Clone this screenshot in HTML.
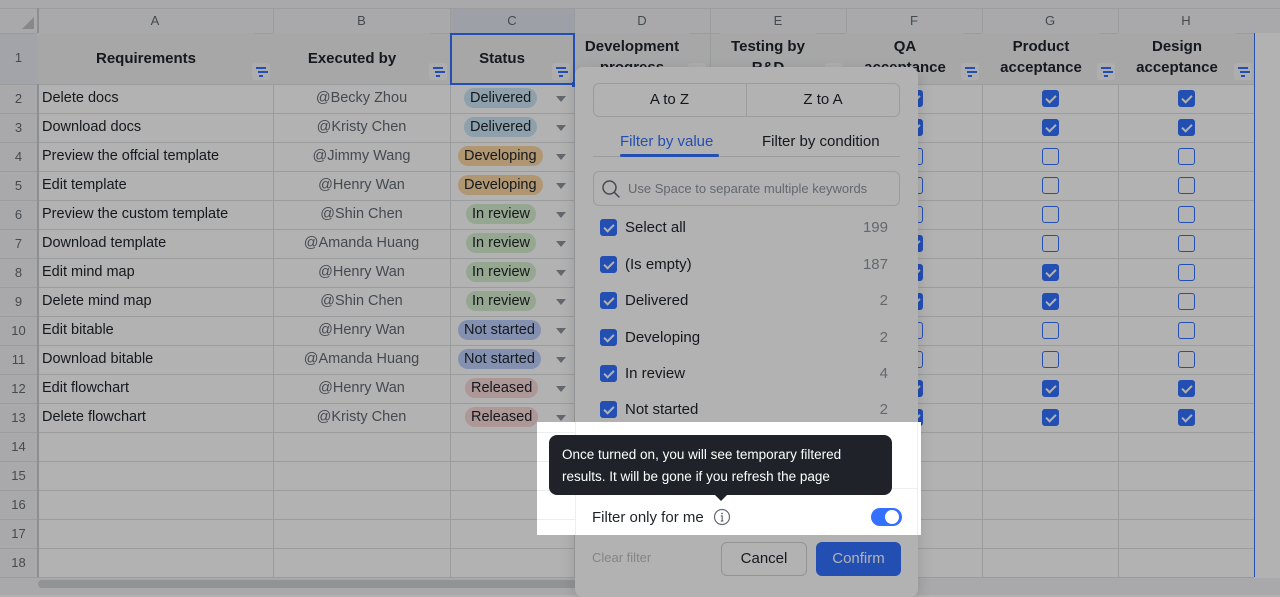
<!DOCTYPE html>
<html><head><meta charset="utf-8"><style>
*{box-sizing:border-box;margin:0;padding:0}
body{width:1280px;height:595px;overflow:hidden;background:#fff;font-family:"Liberation Sans",sans-serif;position:relative;color:#1f2329}
.a{position:absolute}
.hl{background:#f2f3f5}
.vl{position:absolute;top:8px;width:1px;height:569px;background:#dee0e3}
.hr{position:absolute;left:0;width:1254px;height:1px;background:#dee0e3}
.ch{position:absolute;top:8px;height:25px;line-height:25px;text-align:center;font-size:13px;color:#646a73}
.rn{position:absolute;left:0;width:37px;text-align:center;font-size:13px;color:#646a73}
.hd{position:absolute;top:33px;height:51px;display:flex;align-items:center;justify-content:center;text-align:center;font-weight:bold;font-size:15px;line-height:21px;background:#eff0f1}
.fi{position:absolute;width:18px;height:17px;background:#fafafa;border-radius:3px}
.fi:before{content:"";position:absolute;left:4px;top:4px;width:10px;height:1.5px;background:#3370ff;box-shadow:2px 4px 0 -0px #3370ff}
.fi:after{content:"";position:absolute;left:7px;top:12px;width:4px;height:1.5px;background:#3370ff}
.r{position:absolute;font-size:14.5px;line-height:29px;height:29px}
.pill{position:absolute;height:20px;line-height:20px;border-radius:10px;font-size:14.5px;padding:0 6px;color:#1f2329}
.dd{position:absolute;left:556px;width:0;height:0;border-left:5px solid transparent;border-right:5px solid transparent;border-top:6px solid #8f959e}
.cb{position:absolute;width:17px;height:17px;border:1.5px solid #3370ff;border-radius:3px;background:#fff}
.cb.on{background:#3370ff}
.cb.on:after{content:"";position:absolute;left:4.5px;top:1.5px;width:4px;height:8px;border:solid #fff;border-width:0 2px 2px 0;transform:rotate(45deg)}
.item{position:absolute;left:600px;width:288px;font-size:15px;height:20px;line-height:20px}
.item .cb{left:0;top:1px;width:17px;height:17px;border-radius:3px}
.item span.t{position:absolute;left:25px}
.item span.n{position:absolute;right:0;color:#8f959e}
</style></head><body>
<div class="a hl" style="left:0;top:0;width:1280px;height:33px"></div>
<div class="a" style="left:450px;top:8px;width:124px;height:25px;background:#e1e6f0"></div>
<div class="a hl" style="left:0;top:33px;width:37px;height:544px"></div>
<div class="a" style="left:0;top:33px;width:37px;height:51px;background:#e8ebf2"></div>
<div class="a" style="left:22px;top:17px;width:0;height:0;border-left:12px solid transparent;border-bottom:12px solid #c0c3c8"></div>
<div class="a" style="left:37px;top:33px;width:1217px;height:51px;background:#eff0f1"></div>
<div class="a" style="left:0;top:8px;width:1280px;height:1px;background:#dee0e3"></div>
<div class="hr" style="top:33px"></div><div class="hr" style="top:84px"></div>
<div class="hr" style="top:113px"></div><div class="hr" style="top:142px"></div><div class="hr" style="top:171px"></div><div class="hr" style="top:200px"></div><div class="hr" style="top:229px"></div><div class="hr" style="top:258px"></div><div class="hr" style="top:287px"></div><div class="hr" style="top:316px"></div><div class="hr" style="top:345px"></div><div class="hr" style="top:374px"></div><div class="hr" style="top:403px"></div><div class="hr" style="top:432px"></div><div class="hr" style="top:461px"></div><div class="hr" style="top:490px"></div><div class="hr" style="top:519px"></div><div class="hr" style="top:548px"></div><div class="hr" style="top:577px"></div>
<div class="vl" style="left:37px;width:2px;background:#c9ccd1"></div>
<div class="vl" style="left:273px"></div><div class="vl" style="left:450px"></div><div class="vl" style="left:574px"></div><div class="vl" style="left:710px"></div><div class="vl" style="left:846px"></div><div class="vl" style="left:982px"></div><div class="vl" style="left:1118px"></div>
<div class="vl" style="left:1254px;background:#3370ff;top:33px;height:544px"></div>
<div class="a" style="left:37px;top:33px;width:2px;height:51px;background:#3370ff"></div>
<div class="ch" style="left:37px;width:236px">A</div><div class="ch" style="left:273px;width:177px">B</div><div class="ch" style="left:450px;width:124px">C</div><div class="ch" style="left:574px;width:136px">D</div><div class="ch" style="left:710px;width:136px">E</div><div class="ch" style="left:846px;width:136px">F</div><div class="ch" style="left:982px;width:136px">G</div><div class="ch" style="left:1118px;width:136px">H</div>
<div class="rn" style="top:50px">1</div>
<div class="rn" style="top:91px">2</div><div class="rn" style="top:120px">3</div><div class="rn" style="top:149px">4</div><div class="rn" style="top:178px">5</div><div class="rn" style="top:207px">6</div><div class="rn" style="top:236px">7</div><div class="rn" style="top:265px">8</div><div class="rn" style="top:294px">9</div><div class="rn" style="top:323px">10</div><div class="rn" style="top:352px">11</div><div class="rn" style="top:381px">12</div><div class="rn" style="top:410px">13</div><div class="rn" style="top:439px">14</div><div class="rn" style="top:468px">15</div><div class="rn" style="top:497px">16</div><div class="rn" style="top:526px">17</div><div class="rn" style="top:555px">18</div>
<div class="hd" style="left:37px;width:218px">Requirements</div>
<div class="hd" style="left:273px;width:158px">Executed by</div>
<div class="hd" style="left:450px;width:104px;background:transparent">Status</div>
<div class="hd" style="left:574px;width:116px;align-items:flex-start;padding-top:3px;overflow:hidden">Development progress</div>
<div class="hd" style="left:720px;width:96px;align-items:flex-start;padding-top:3px;overflow:hidden">Testing by R&amp;D</div>
<div class="hd" style="left:846px;width:118px;align-items:flex-start;padding-top:3px">QA<br>acceptance</div>
<div class="hd" style="left:982px;width:118px;align-items:flex-start;padding-top:3px">Product<br>acceptance</div>
<div class="hd" style="left:1118px;width:118px;align-items:flex-start;padding-top:3px">Design<br>acceptance</div>
<div class="a" style="left:450px;top:33px;width:125px;height:52px;border:2px solid #3370ff"></div>
<div class="a" style="left:572px;top:82px;width:5px;height:5px;background:#3370ff"></div>
<div class="fi" style="left:252px;top:63px"></div><div class="fi" style="left:429px;top:63px"></div><div class="fi" style="left:552px;top:63px"></div><div class="fi" style="left:688px;top:63px"></div><div class="fi" style="left:825px;top:63px"></div><div class="fi" style="left:961px;top:63px"></div><div class="fi" style="left:1097px;top:63px"></div><div class="fi" style="left:1234px;top:63px"></div>
<div class="r" style="left:42px;top:84px">Delete docs</div>
<div class="r" style="left:42px;top:113px">Download docs</div>
<div class="r" style="left:42px;top:142px">Preview the offcial template</div>
<div class="r" style="left:42px;top:171px">Edit template</div>
<div class="r" style="left:42px;top:200px">Preview the custom template</div>
<div class="r" style="left:42px;top:229px">Download template</div>
<div class="r" style="left:42px;top:258px">Edit mind map</div>
<div class="r" style="left:42px;top:287px">Delete mind map</div>
<div class="r" style="left:42px;top:316px">Edit bitable</div>
<div class="r" style="left:42px;top:345px">Download bitable</div>
<div class="r" style="left:42px;top:374px">Edit flowchart</div>
<div class="r" style="left:42px;top:403px">Delete flowchart</div>
<div class="r" style="left:273px;width:177px;text-align:center;top:84px;color:#646a73">@Becky Zhou</div>
<div class="r" style="left:273px;width:177px;text-align:center;top:113px;color:#646a73">@Kristy Chen</div>
<div class="r" style="left:273px;width:177px;text-align:center;top:142px;color:#646a73">@Jimmy Wang</div>
<div class="r" style="left:273px;width:177px;text-align:center;top:171px;color:#646a73">@Henry Wan</div>
<div class="r" style="left:273px;width:177px;text-align:center;top:200px;color:#646a73">@Shin Chen</div>
<div class="r" style="left:273px;width:177px;text-align:center;top:229px;color:#646a73">@Amanda Huang</div>
<div class="r" style="left:273px;width:177px;text-align:center;top:258px;color:#646a73">@Henry Wan</div>
<div class="r" style="left:273px;width:177px;text-align:center;top:287px;color:#646a73">@Shin Chen</div>
<div class="r" style="left:273px;width:177px;text-align:center;top:316px;color:#646a73">@Henry Wan</div>
<div class="r" style="left:273px;width:177px;text-align:center;top:345px;color:#646a73">@Amanda Huang</div>
<div class="r" style="left:273px;width:177px;text-align:center;top:374px;color:#646a73">@Henry Wan</div>
<div class="r" style="left:273px;width:177px;text-align:center;top:403px;color:#646a73">@Kristy Chen</div>
<div class="pill" style="left:464px;top:88px;background:#cbe6f5">Delivered</div>
<div class="pill" style="left:464px;top:117px;background:#cbe6f5">Delivered</div>
<div class="pill" style="left:458px;top:146px;background:#fcd9a4">Developing</div>
<div class="pill" style="left:458px;top:175px;background:#fcd9a4">Developing</div>
<div class="pill" style="left:466px;top:204px;background:#d6efd0">In review</div>
<div class="pill" style="left:466px;top:233px;background:#d6efd0">In review</div>
<div class="pill" style="left:466px;top:262px;background:#d6efd0">In review</div>
<div class="pill" style="left:466px;top:291px;background:#d6efd0">In review</div>
<div class="pill" style="left:458px;top:320px;background:#bccffc">Not started</div>
<div class="pill" style="left:458px;top:349px;background:#bccffc">Not started</div>
<div class="pill" style="left:465px;top:378px;background:#f8d8d8">Released</div>
<div class="pill" style="left:465px;top:407px;background:#f8d8d8">Released</div>
<div class="dd" style="top:96px"></div><div class="dd" style="top:125px"></div><div class="dd" style="top:154px"></div><div class="dd" style="top:183px"></div><div class="dd" style="top:212px"></div><div class="dd" style="top:241px"></div><div class="dd" style="top:270px"></div><div class="dd" style="top:299px"></div><div class="dd" style="top:328px"></div><div class="dd" style="top:357px"></div><div class="dd" style="top:386px"></div><div class="dd" style="top:415px"></div>
<div class="cb on" style="left:906px;top:90px"></div><div class="cb on" style="left:906px;top:119px"></div><div class="cb" style="left:906px;top:148px"></div><div class="cb" style="left:906px;top:177px"></div><div class="cb" style="left:906px;top:206px"></div><div class="cb on" style="left:906px;top:235px"></div><div class="cb on" style="left:906px;top:264px"></div><div class="cb on" style="left:906px;top:293px"></div><div class="cb" style="left:906px;top:322px"></div><div class="cb" style="left:906px;top:351px"></div><div class="cb on" style="left:906px;top:380px"></div><div class="cb on" style="left:906px;top:409px"></div>
<div class="cb on" style="left:1042px;top:90px"></div><div class="cb on" style="left:1042px;top:119px"></div><div class="cb" style="left:1042px;top:148px"></div><div class="cb" style="left:1042px;top:177px"></div><div class="cb" style="left:1042px;top:206px"></div><div class="cb" style="left:1042px;top:235px"></div><div class="cb on" style="left:1042px;top:264px"></div><div class="cb on" style="left:1042px;top:293px"></div><div class="cb" style="left:1042px;top:322px"></div><div class="cb" style="left:1042px;top:351px"></div><div class="cb on" style="left:1042px;top:380px"></div><div class="cb on" style="left:1042px;top:409px"></div>
<div class="cb on" style="left:1178px;top:90px"></div><div class="cb on" style="left:1178px;top:119px"></div><div class="cb" style="left:1178px;top:148px"></div><div class="cb" style="left:1178px;top:177px"></div><div class="cb" style="left:1178px;top:206px"></div><div class="cb" style="left:1178px;top:235px"></div><div class="cb" style="left:1178px;top:264px"></div><div class="cb" style="left:1178px;top:293px"></div><div class="cb" style="left:1178px;top:322px"></div><div class="cb" style="left:1178px;top:351px"></div><div class="cb on" style="left:1178px;top:380px"></div><div class="cb on" style="left:1178px;top:409px"></div>
<div class="a hl" style="left:0;top:578px;width:1280px;height:17px"></div>
<div class="a" style="left:38px;top:580px;width:560px;height:8px;border-radius:4px;background:#d0d3d6"></div>
<div class="a" style="left:575px;top:67px;width:343px;height:530px;background:#fff;border-radius:8px;box-shadow:0 4px 16px rgba(0,0,0,.15)"></div>
<div class="a" style="left:593px;top:83px;width:307px;height:34px;border:1px solid #dee0e3;border-radius:6px"></div>
<div class="a" style="left:746px;top:83px;width:1px;height:34px;background:#dee0e3"></div>
<div class="a" style="left:593px;top:83px;width:153px;line-height:34px;text-align:center;font-size:15px">A to Z</div>
<div class="a" style="left:746px;top:83px;width:154px;line-height:34px;text-align:center;font-size:15px">Z to A</div>
<div class="a" style="left:620px;top:132px;font-size:15px;color:#3370ff;line-height:20px">Filter by value</div>
<div class="a" style="left:762px;top:132px;font-size:15px;line-height:20px">Filter by condition</div>
<div class="a" style="left:593px;top:156px;width:307px;height:1px;background:#dee0e3"></div>
<div class="a" style="left:620px;top:154px;width:99px;height:3px;border-radius:2px;background:#3370ff"></div>
<div class="a" style="left:593px;top:171px;width:307px;height:35px;border:1px solid #dee0e3;border-radius:6px"></div>
<svg class="a" style="left:601px;top:179px" width="20" height="20" viewBox="0 0 20 20"><circle cx="8.5" cy="8.5" r="6.5" fill="none" stroke="#646a73" stroke-width="1.5"/><path d="M13.3 13.3L18 18" stroke="#646a73" stroke-width="1.5" stroke-linecap="round"/></svg>
<div class="a" style="left:628px;top:180px;font-size:13px;color:#8f959e;line-height:18px">Use Space to separate multiple keywords</div>
<div class="item" style="top:218px"><div class="cb on"></div><span class="t">Select all</span><span class="n">199</span></div>
<div class="item" style="top:255px"><div class="cb on"></div><span class="t">(Is empty)</span><span class="n">187</span></div>
<div class="item" style="top:291px"><div class="cb on"></div><span class="t">Delivered</span><span class="n">2</span></div>
<div class="item" style="top:328px"><div class="cb on"></div><span class="t">Developing</span><span class="n">2</span></div>
<div class="item" style="top:364px"><div class="cb on"></div><span class="t">In review</span><span class="n">4</span></div>
<div class="item" style="top:400px"><div class="cb on"></div><span class="t">Not started</span><span class="n">2</span></div>
<div class="a" style="left:592px;top:549px;font-size:13px;color:#bbbfc4;line-height:18px">Clear filter</div>
<div class="a" style="left:721px;top:542px;width:86px;height:34px;border:1px solid #d0d3d6;border-radius:6px;text-align:center;line-height:32px;font-size:15px">Cancel</div>
<div class="a" style="left:816px;top:542px;width:85px;height:34px;background:#3370ff;border-radius:6px;text-align:center;line-height:34px;font-size:15px;color:#fff">Confirm</div>
<div class="a" style="left:537px;top:422px;width:384px;height:113px;box-shadow:0 0 0 2000px rgba(0,0,0,.3);background:transparent"></div>
<div class="a" style="left:537px;top:422px;width:384px;height:113px;background:#fff"></div>
<div class="a" style="left:537px;top:432px;width:38px;height:1px;background:#eceef0"></div>
<div class="a" style="left:537px;top:461px;width:38px;height:1px;background:#eceef0"></div>
<div class="a" style="left:537px;top:490px;width:38px;height:1px;background:#eceef0"></div>
<div class="a" style="left:537px;top:519px;width:38px;height:1px;background:#eceef0"></div>
<div class="a" style="left:575px;top:422px;width:1px;height:113px;background:#eceef0"></div>
<div class="a" style="left:917px;top:422px;width:1px;height:113px;background:#eceef0"></div>
<div class="a" style="left:576px;top:488px;width:341px;height:1px;background:#eceef0"></div>
<div class="a" style="left:592px;top:508px;font-size:15px;line-height:20px">Filter only for me</div>
<svg class="a" style="left:713px;top:508px" width="18" height="18" viewBox="0 0 18 18"><circle cx="9" cy="9" r="7.5" fill="none" stroke="#646a73" stroke-width="1.2"/><circle cx="9" cy="5.5" r="0.9" fill="#646a73"/><path d="M7.8 8h1.4v5M7.8 13h2.6" stroke="#646a73" stroke-width="1.2" fill="none"/></svg>
<div class="a" style="left:871px;top:508px;width:31px;height:18px;border-radius:9px;background:#3370ff"></div>
<div class="a" style="left:885px;top:510px;width:14px;height:14px;border-radius:7px;background:#fff"></div>
<div class="a" style="left:549px;top:435px;width:343px;height:60px;background:#1f2329;border-radius:8px"></div>
<div class="a" style="left:714px;top:494px;width:0;height:0;border-left:7px solid transparent;border-right:7px solid transparent;border-top:7px solid #1f2329"></div>
<div class="a" style="left:562px;top:444px;width:300px;font-size:13.5px;line-height:22px;color:#fff">Once turned on, you will see temporary filtered results. It will be gone if you refresh the page</div>
</body></html>
